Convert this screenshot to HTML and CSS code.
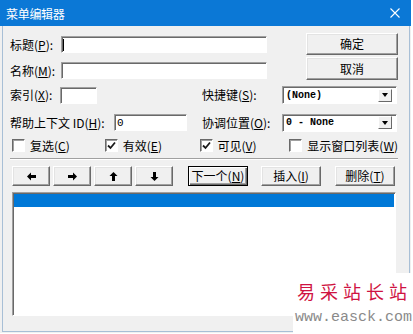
FILE: index.html
```html
<!DOCTYPE html>
<html lang="zh-CN">
<head>
  <meta charset="UTF-8">
  <meta name="viewport" content="width=device-width, initial-scale=1">
  <title>菜单编辑器</title>

  <link rel="stylesheet" href="styles.css">
</head>
<body>
<div class="Window">
  <div class="TitleBar">
    <span class="TitleBar__Text">菜单编辑器</span>
    <svg class="TitleBar__Close" width="10" height="10" viewBox="0 0 10 10">
      <path d="M0.5 0.5 L9.5 9.5 M9.5 0.5 L0.5 9.5" stroke="#fff" stroke-width="1.1" fill="none"/>
    </svg>
  </div>
  <div class="Body">
    <div class="Top">
      <div class="Top__Fields">
        <div class="Row">
          <span class="Label Label--caption">标题(<u>P</u>):</span>
          <div class="Input Input--caption"><span class="Input__Caret"></span></div>
        </div>
        <div class="Row">
          <span class="Label Label--caption">名称(<u>M</u>):</span>
          <div class="Input Input--caption"></div>
        </div>
      </div>
      <div class="Top__Actions">
        <button class="Button Button--side">确定</button>
        <button class="Button Button--side Button--tall">取消</button>
      </div>
    </div>

    <div class="Row Row--index">
      <div class="Half Half--left">
        <span class="Label Label--index">索引(<u>X</u>):</span>
        <div class="Input Input--index"></div>
      </div>
      <div class="Half Half--right">
        <span class="Label Label--right">快捷键(<u>S</u>):</span>
        <div class="Combo">
          <span class="Combo__Text">(None)</span>
          <span class="Combo__Drop"><span class="Combo__Arrow"></span></span>
        </div>
      </div>
    </div>

    <div class="Row Row--help">
      <div class="Half Half--left">
        <span class="Label Label--help">帮助上下文 ID(<u>H</u>):</span>
        <div class="Input Input--help"><span class="Input__Value">0</span></div>
      </div>
      <div class="Half Half--right">
        <span class="Label Label--right">协调位置(<u>O</u>):</span>
        <div class="Combo">
          <span class="Combo__Text">0 - None</span>
          <span class="Combo__Drop"><span class="Combo__Arrow"></span></span>
        </div>
      </div>
    </div>

    <div class="Checks">
      <div class="Check Check--first">
        <span class="Check__Box"></span>
        <span>复选(<u>C</u>)</span>
      </div>
      <div class="Check Check--second">
        <span class="Check__Box">
          <svg width="9" height="9" viewBox="0 0 9 9"><path d="M1 4.5 L3.5 7 L8 1.5" stroke="#1a1a1a" stroke-width="1.8" fill="none"/></svg>
        </span>
        <span>有效(<u>E</u>)</span>
      </div>
      <div class="Check Check--third">
        <span class="Check__Box">
          <svg width="9" height="9" viewBox="0 0 9 9"><path d="M1 4.5 L3.5 7 L8 1.5" stroke="#1a1a1a" stroke-width="1.8" fill="none"/></svg>
        </span>
        <span>可见(<u>V</u>)</span>
      </div>
      <div class="Check">
        <span class="Check__Box"></span>
        <span>显示窗口列表(<u>W</u>)</span>
      </div>
    </div>

    <div class="Separator"></div>

    <div class="Toolbar">
      <div class="Toolbar__Arrows">
        <button class="Button Button--arrow">
          <svg width="9" height="9" viewBox="0 0 9 9"><path d="M0 4.5 L4 0.5 L4 3 L9 3 L9 6 L4 6 L4 8.5 Z" fill="#000"/></svg>
        </button>
        <button class="Button Button--arrow">
          <svg width="9" height="9" viewBox="0 0 9 9"><path d="M9 4.5 L5 0.5 L5 3 L0 3 L0 6 L5 6 L5 8.5 Z" fill="#000"/></svg>
        </button>
        <button class="Button Button--arrow">
          <svg width="9" height="9" viewBox="0 0 9 9"><path d="M4.5 0 L0.5 4 L3 4 L3 9 L6 9 L6 4 L8.5 4 Z" fill="#000"/></svg>
        </button>
        <button class="Button Button--arrow">
          <svg width="9" height="9" viewBox="0 0 9 9"><path d="M4.5 9 L0.5 5 L3 5 L3 0 L6 0 L6 5 L8.5 5 Z" fill="#000"/></svg>
        </button>
      </div>
      <button class="Button Button--default Button--next">下一个(<u>N</u>)</button>
      <button class="Button Button--wide Button--insert">插入(<u>I</u>)</button>
      <button class="Button Button--wide Button--delete">删除(<u>T</u>)</button>
    </div>

    <div class="List">
      <div class="List__Item List__Item--selected"></div>
    </div>
  </div>
</div>

<!-- Site watermark stamped over the bottom-right corner of the screenshot. -->
<div class="Watermark">
  <div class="Watermark__Brand">易采站长站</div>
  <div class="Watermark__Url">www.easck.com</div>
</div>
</body>
</html>
```

FILE: styles.css
```css
html, body {
  padding: 0;
  margin: 0;
}

body {
  position: relative;
  width: 413px;
  height: 334px;
  overflow: hidden;
  background-color: #ffffff;
  font-family: "Noto Sans CJK SC", "Liberation Sans", sans-serif;
  font-size: 12px;
  color: #000000;
}

.Window {
  width: 411px;
  height: 333px;
  display: flex;
  flex-direction: column;
  background-color: #f0f0f0;
}

.TitleBar {
  flex: none;
  height: 26px;
  display: flex;
  align-items: center;
  padding: 0 11px 0 6px;
  background-color: #0b78d6;
  color: #ffffff;
}

.TitleBar__Text {
  font-size: 12px;
  letter-spacing: -0.3px;
}

.TitleBar__Close {
  margin-left: auto;
}

.Body {
  flex: 1;
  margin: 0 1px 1px 2px;
  padding: 7px 11px 0 7px;
  border: 1px solid #a8bfd6;
  border-top: none;
}

.Top {
  display: flex;
}

.Top__Fields {
  display: flex;
  flex-direction: column;
  gap: 9px;
  padding-top: 3px;
}

.Top__Actions {
  margin-left: auto;
  display: flex;
  flex-direction: column;
  gap: 2px;
}

.Row {
  display: flex;
  align-items: center;
}

.Top__Fields .Row {
  height: 17px;
}

.Row--index {
  margin-top: 6px;
  height: 18px;
}

.Row--help {
  margin-top: 9px;
  height: 19px;
}

.Half {
  display: flex;
  align-items: center;
}

.Half--left {
  width: 192px;
}

.Half--right {
  flex: 1;
}

.Label {
  white-space: nowrap;
  line-height: 14px;
}

.Label--caption {
  width: 51px;
}

.Label--index {
  width: 50px;
}

.Label--help {
  width: 104px;
}

.Label--right {
  width: 80px;
}

.Input,
.Combo,
.List {
  box-sizing: border-box;
  background-color: #ffffff;
  border: 1px solid;
  border-color: #a0a0a0 #ffffff #ffffff #a0a0a0;
  box-shadow: inset 1px 1px #696969;
}

.Input {
  height: 17px;
  display: flex;
  align-items: center;
  padding: 0 2px;
}

.Input--caption {
  width: 206px;
  padding-left: 1px;
}

.Input--index {
  width: 37px;
}

.Input--help {
  width: 73px;
}

.Input__Caret {
  width: 1px;
  height: 12px;
  background-color: #000000;
}

.Input__Value {
  font-family: "Liberation Mono", monospace;
  font-size: 11px;
}

.Combo {
  width: 115px;
  height: 18px;
  display: flex;
  align-items: center;
  padding: 0 4px 0 3px;
}

.Combo__Text {
  font-family: "Liberation Mono", monospace;
  font-size: 10px;
  font-weight: bold;
  white-space: pre;
}

.Combo__Drop {
  box-sizing: border-box;
  margin-left: auto;
  width: 14px;
  height: 13px;
  display: flex;
  align-items: center;
  justify-content: center;
  background-color: #f0f0f0;
  border: 1px solid;
  border-color: #ffffff #696969 #696969 #ffffff;
}

.Combo__Arrow {
  width: 0;
  height: 0;
  border-left: 3px solid transparent;
  border-right: 3px solid transparent;
  border-top: 4px solid #000000;
}

.Checks {
  margin-top: 7px;
  height: 13px;
  padding-left: 2px;
  display: flex;
  align-items: center;
}

.Check {
  display: flex;
  align-items: center;
  gap: 5px;
  white-space: nowrap;
  line-height: 14px;
}

.Check--first {
  width: 93px;
}

.Check--second {
  width: 95px;
}

.Check--third {
  width: 90px;
}

.Check__Box {
  box-sizing: border-box;
  width: 13px;
  height: 13px;
  display: flex;
  align-items: center;
  justify-content: center;
  background-color: #ffffff;
  border: 1px solid;
  border-color: #696969 #ffffff #ffffff #696969;
  box-shadow: inset 1px 1px #a0a0a0;
}

.Separator {
  margin-top: 6px;
  height: 0;
  border-top: 1px solid #a0a0a0;
  border-bottom: 1px solid #ffffff;
}

.Toolbar {
  margin-top: 6px;
  padding-left: 2px;
  height: 20px;
  display: flex;
}

.Toolbar__Arrows {
  display: flex;
  gap: 3px;
}

.Button {
  box-sizing: border-box;
  padding: 0;
  display: flex;
  align-items: center;
  justify-content: center;
  font: inherit;
  line-height: 14px;
  color: #000000;
  background-color: #f0f0f0;
  border: 1px solid;
  border-color: #ffffff #696969 #696969 #ffffff;
  box-shadow: inset -1px -1px #a0a0a0, inset 1px 1px #e3e3e3;
  white-space: nowrap;
}

.Button--side {
  width: 92px;
  height: 22px;
}

.Button--tall {
  height: 23px;
}

.Button--arrow {
  width: 38px;
  height: 20px;
}

.Button--default {
  border-color: #000000;
  box-shadow: inset 1px 1px #ffffff, inset -1px -1px #696969, inset -2px -2px #a0a0a0;
}

.Button--next {
  margin-left: 15px;
  width: 60px;
  height: 20px;
}

.Button--wide {
  width: 60px;
  height: 20px;
}

.Button--insert {
  margin-left: 13px;
}

.Button--delete {
  margin-left: 14px;
}

.List {
  margin: 6px 0 0 2px;
  width: 384px;
  height: 124px;
  padding: 1px;
}

.List__Item--selected {
  height: 13px;
  background-color: #0078d7;
}

.Watermark {
  position: absolute;
  right: 0;
  bottom: 0;
  box-sizing: border-box;
  width: 120px;
  height: 61px;
  padding: 8px 0 0 2px;
  background-color: #ffffff;
}

.Watermark__Brand {
  margin-left: 2px;
  font-size: 18px;
  line-height: 20px;
  letter-spacing: 5px;
  color: #cf1342;
  white-space: nowrap;
}

.Watermark__Url {
  margin-top: 9px;
  font-family: "Liberation Mono", monospace;
  font-size: 15px;
  line-height: 16px;
  color: #8a8a8a;
  white-space: nowrap;
}
```
